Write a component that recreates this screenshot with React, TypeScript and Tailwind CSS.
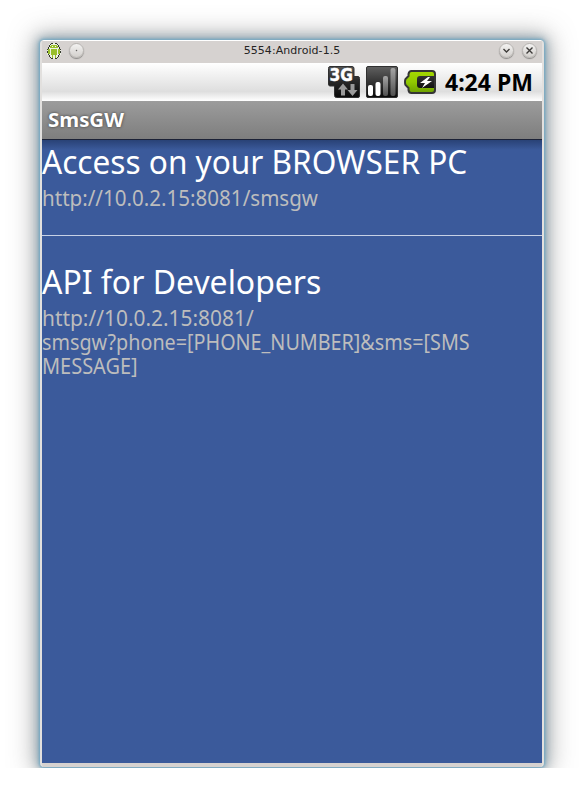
import type { ReactNode } from "react";

function AndroidIcon() {
  return (
    <svg width="14" height="16" viewBox="0 0 14 16" shapeRendering="crispEdges">
      <path d="M4 0h6v1h2v3h1v2h1v6h-2v2h-2v2H4v-2H2v-2H0V6h1V4h1V1h2z" fill="#eef2e4" />
      <path d="M4 0h2v1H4zM8 0h2v1H8zM2 2h1v2H2zM11 2h1v2h-1zM1 4h1v2H1zM12 4h1v2h-1zM0 6h1v1H0zM0 8h1v2H0zM13 6h1v1h-1zM13 8h1v2h-1zM1 11h1v1H1zM12 11h1v1h-1zM2 12h1v2H2zM11 12h1v2h-1zM3 14h1v1H3zM10 14h1v1h-1zM4 15h2v1H4zM8 15h2v1H8zM3 1h1v1H3zM10 1h1v1h-1z" fill="#33382c" />
      <path d="M4 2h6v1h1v2H3V3h1zM4 6h6v6H9v3H8v-3H6v3H5v-3H4zM1 6h2v5H1zM11 6h2v5h-2z" fill="#99bf2b" />
      <path d="M5 3h1v1H5zM8 3h1v1H8z" fill="#f4f7e9" />
    </svg>
  );
}

function RoundButton({ children }: { children: ReactNode }) {
  return (
    <span className="flex h-[15px] w-[15px] items-center justify-center rounded-full border border-[#b7b4b1] bg-linear-to-b from-[#f3f2f1] to-[#d3d0cd] shadow-[0_1px_1px_#8b8987]">
      <svg width="13" height="13" viewBox="0 0 13 13" fill="none" stroke="#3e3c3a" strokeWidth="1.4">
        {children}
      </svg>
    </span>
  );
}

function NetworkIcon() {
  return (
    <svg width="32" height="32" viewBox="0 0 32 32">
      <defs>
        <linearGradient id="network" x2="0" y2="1">
          <stop stopColor="#555" />
          <stop offset=".45" stopColor="#2a2a2a" />
          <stop offset="1" stopColor="#080808" />
        </linearGradient>
      </defs>
      <path d="M2 .5H24q2 0 2 2V10.500h4q1.500 0 1.500 2V30q0 1.500-1.500 1.500H8.500Q6.500 31.500 6.500 29.500V20H2Q.5 20 .5 18V2.500Q.5 .5 2 .5Z" fill="url(#network)" stroke="#303030" />
      <text x="1.500" y="15" fontFamily="DejaVu Sans" fontWeight="bold" fontSize="17.500" textLength="23.500" lengthAdjust="spacingAndGlyphs" fill="#fff" stroke="#fff" strokeWidth=".4">3G</text>
      <path d="M15 17.500l5 6h-3v6h-4v-6h-3zM24.500 30l-5-6h3v-6h4v6h3z" fill="#999" />
    </svg>
  );
}

function SignalIcon() {
  return (
    <svg width="32" height="32" viewBox="0 0 32 32">
      <defs>
        <linearGradient id="signal" x2="0" y2="1">
          <stop stopColor="#606060" />
          <stop offset="1" stopColor="#080808" />
        </linearGradient>
        <linearGradient id="bar" x2="0" y2="1">
          <stop stopColor="#a5a5a5" />
          <stop offset="1" stopColor="#505050" />
        </linearGradient>
      </defs>
      <rect x=".5" y=".5" width="31" height="31" rx="1.500" fill="url(#signal)" stroke="#303030" />
      <rect x="2" y="19" width="5" height="11" rx="2" fill="#fff" />
      <rect x="9.500" y="16" width="5" height="14" rx="2" fill="#fff" />
      <rect x="17" y="10" width="5" height="20" rx="2" fill="url(#bar)" />
      <rect x="24.500" y="2" width="5" height="28" rx="2" fill="url(#bar)" />
    </svg>
  );
}

function BatteryIcon() {
  return (
    <svg width="32" height="32" viewBox="0 0 32 32">
      <defs>
        <linearGradient id="battery" x2="0" y2="1">
          <stop stopColor="#a5d900" />
          <stop offset=".5" stopColor="#91c900" />
          <stop offset="1" stopColor="#6c9f00" />
        </linearGradient>
        <linearGradient id="charge" x2="0" y2="1">
          <stop stopColor="#333" />
          <stop offset="1" stopColor="#111" />
        </linearGradient>
      </defs>
      <path d="M7.500 5H28q3 0 3 3V24q0 3-3 3H7.500Q5 27 4.500 24V22L1.500 19Q1 18 1 16T1.500 13L4.500 10V8Q5 5 7.500 5Z" fill="url(#battery)" stroke="#353535" strokeWidth="2" />
      <path d="M30 10H16q-3 0-3 3v6q0 3 3 3h14z" fill="url(#charge)" />
      <path d="M24 11l-8 6h5l-3 5 10-7h-5l3-4z" fill="#fff" />
    </svg>
  );
}

export default function App() {
  return (
    <div className="h-[807px] w-[584px] overflow-hidden bg-white font-['Noto_Sans','Open_Sans',sans-serif]">
      <div className="h-[768px] overflow-hidden px-10 pt-10">
        <main className="h-[727px] w-[504px] overflow-hidden rounded-[4px] border-x-2 border-[#e2e0de] bg-[#d6d2d0] shadow-[0_0_3px_1px_#6fa8c4,0_0_10px_3px_#5f88a088,0_0_24px_6px_#66666680]">
          <header className="flex h-[23px] items-center border-t border-white px-[5px] pb-[3px]">
            <div className="flex w-[60px] items-center gap-2">
              <AndroidIcon />
              <RoundButton><circle cx="6.5" cy="6.5" r=".3" strokeWidth="1" /></RoundButton>
            </div>
            <div className="flex-1 text-center font-['DejaVu_Sans',sans-serif] text-[11px] leading-none text-[#252423]">
              <span className="inline-block tracking-[0.06px]">5554:Android-1.5</span>
            </div>
            <div className="flex w-[60px] justify-end gap-2">
              <RoundButton><path d="M3.500 5l3 3 3-3" /></RoundButton>
              <RoundButton><path d="M3.500 3.500l6 6m0-6l-6 6" /></RoundButton>
            </div>
          </header>
          <div className="flex h-[38px] items-center justify-end bg-linear-to-b from-white from-0% via-[#dedede] via-75% to-white pr-[10px]">
            <NetworkIcon />
            <span className="ml-[6px]"><SignalIcon /></span>
            <span className="ml-[6px]"><BatteryIcon /></span>
            <span className="ml-[9px] w-[87px] text-[23px] leading-[38px] font-bold whitespace-nowrap text-black">
              <span className="inline-block origin-left">4:24 PM</span>
            </span>
          </div>
          <div className="h-[38px] bg-linear-to-b from-[#9c9c9c] to-[#7e7e7e] pl-[6px] text-[20px] leading-[37px] font-bold text-white [text-shadow:0_0_3px_#333]">
            <span className="inline-block origin-left scale-x-[1.02]">SmsGW</span>
          </div>
          <div className="h-[624px] border-t border-[#1b2136] bg-[#3b5a9b] bg-linear-to-b from-[#294276] to-[#3b5a9b] to-[10px] whitespace-nowrap text-[#bdbdbd]">
            <section className="h-[96px] border-b border-[#c7d1e5] pt-[1px]">
              <h1 className="h-[45px] text-[33px] leading-[42px] text-white"><span className="inline-block origin-left scale-x-[0.957]">Access on your BROWSER PC</span></h1>
              <p className="text-[21px] leading-6"><span className="inline-block origin-left scale-x-[0.979]">http://10.0.2.15:8081/smsgw</span></p>
            </section>
            <section className="pt-[25px]">
              <h2 className="h-[45px] text-[33px] leading-[42px] text-white"><span className="inline-block origin-left scale-x-[0.968]">API for Developers</span></h2>
              <div className="text-[21px] leading-6">
                <p><span className="inline-block origin-left scale-x-[0.995]">http://10.0.2.15:8081/</span></p>
                <p><span className="inline-block origin-left scale-x-[0.941]">smsgw?phone=[PHONE_NUMBER]&amp;sms=[SMS</span></p>
                <p><span className="inline-block origin-left scale-x-[0.95]">MESSAGE]</span></p>
              </div>
            </section>
          </div>
        </main>
      </div>
    </div>
  );
}
